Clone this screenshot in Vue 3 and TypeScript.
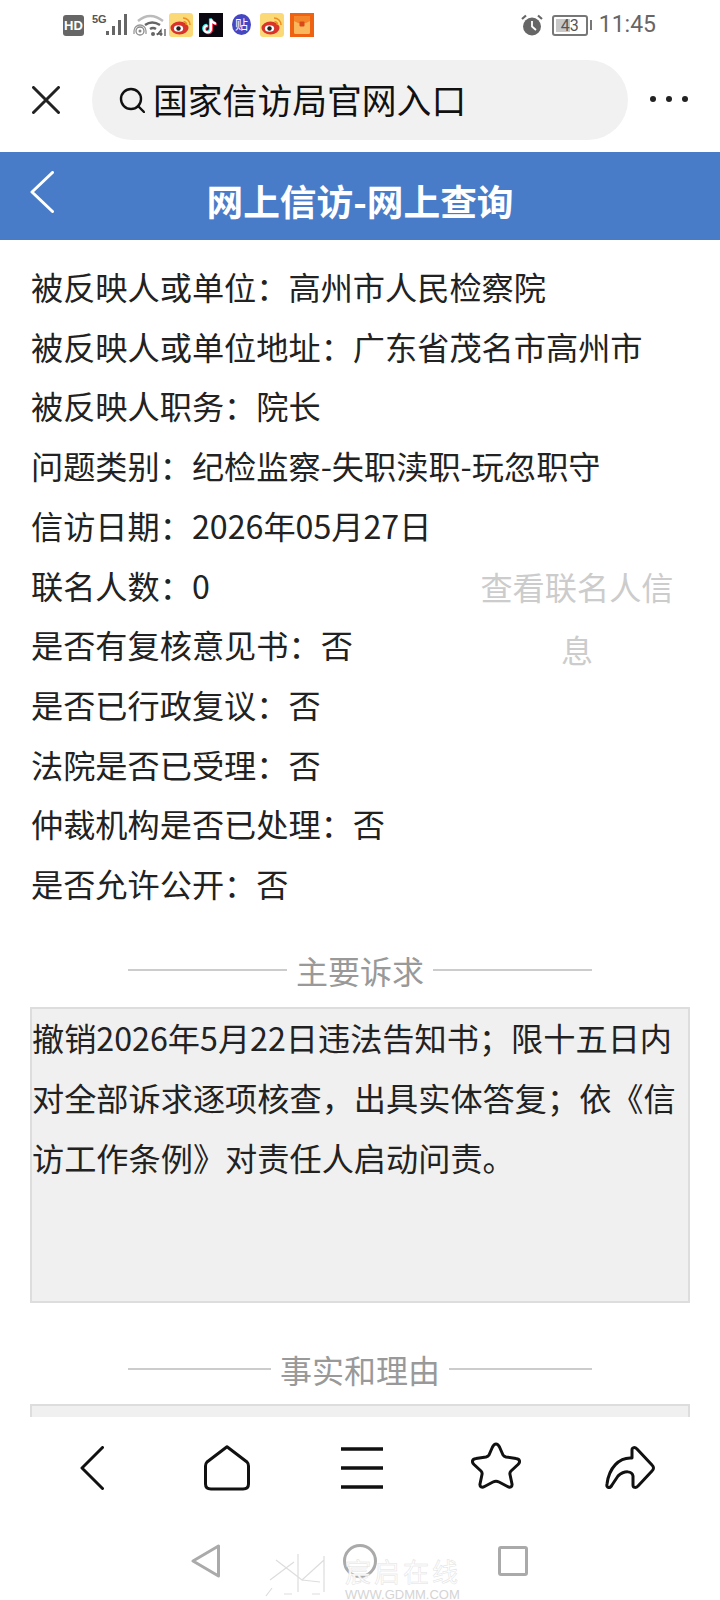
<script setup lang="ts">
const rows: { label: string; value: string }[] = [
  { label: "被反映人或单位", value: "高州市人民检察院" },
  { label: "被反映人或单位地址", value: "广东省茂名市高州市" },
  { label: "被反映人职务", value: "院长" },
  { label: "问题类别", value: "纪检监察-失职渎职-玩忽职守" },
  { label: "信访日期", value: "2026年05月27日" },
  { label: "联名人数", value: "0" },
  { label: "是否有复核意见书", value: "否" },
  { label: "是否已行政复议", value: "否" },
  { label: "法院是否已受理", value: "否" },
  { label: "仲裁机构是否已处理", value: "否" },
  { label: "是否允许公开", value: "否" },
];
</script>

<template>
  <div class="page">
    <div class="status">
      <div class="status-left">
        <span class="hd">HD</span>
        <span class="net">5G</span>
        <svg class="signal" width="24" height="24" viewBox="0 0 24 24">
          <rect x="1" y="18" width="3" height="4" fill="#666" />
          <rect x="7" y="13" width="3" height="9" fill="#666" />
          <rect x="13" y="7" width="3" height="15" fill="#666" />
          <rect x="19" y="1" width="3" height="21" fill="#666" />
        </svg>
        <svg class="wifi" width="33" height="24" viewBox="0 0 33 24" fill="none">
          <path d="M5 8 Q17 -2 30 8" stroke="#bbb" stroke-width="2.4" />
          <path d="M12 12 Q19 7 27 12" stroke="#666" stroke-width="2.4" />
          <path d="M17 16 Q20 14 23 16" stroke="#666" stroke-width="2.4" />
          <circle cx="20" cy="21" r="2" fill="#666" />
          <circle cx="7" cy="18" r="1.5" fill="#888" />
          <circle cx="7" cy="18" r="4" stroke="#888" stroke-width="1.3" />
          <path d="M1 21 V18 A6 6 0 0 1 13 18 V21" stroke="#999" stroke-width="1.3" />
          <path d="M24 22 L28 17 V23 M23.5 21 H29.5" stroke="#555" stroke-width="1.3" />
          <path d="M32 16 V23" stroke="#555" stroke-width="1.3" />
        </svg>
        <svg class="app first-app" width="24" height="24" viewBox="0 0 24 24">
          <rect width="24" height="24" rx="3" fill="#fcd977" />
          <ellipse cx="10.5" cy="15" rx="9" ry="6.5" fill="#d9342b" />
          <ellipse cx="9.5" cy="15.5" rx="4.6" ry="3.2" fill="#fff" />
          <circle cx="9.5" cy="15.5" r="2.2" fill="#222" />
          <path d="M14 5 A7 7 0 0 1 21 12 M14.5 8.5 A3.5 3.5 0 0 1 17.5 12" fill="none" stroke="#ef8d1e" stroke-width="1.6" />
        </svg>
        <svg class="app tiktok" width="24" height="24" viewBox="0 0 24 24" fill="none">
          <rect width="24" height="24" fill="#0b0710" />
          <path d="M12 6 V16 A3.4 3.4 0 1 1 8.6 12.6 M12 6 Q13 10 17 10.6" stroke="#25f4ee" stroke-width="2.6" transform="translate(-0.8 -0.6)" />
          <path d="M12 6 V16 A3.4 3.4 0 1 1 8.6 12.6 M12 6 Q13 10 17 10.6" stroke="#fe2c55" stroke-width="2.6" transform="translate(0.8 0.6)" />
          <path d="M12 6 V16 A3.4 3.4 0 1 1 8.6 12.6 M12 6 Q13 10 17 10.6" stroke="#fff" stroke-width="2.2" />
        </svg>
        <span class="tie">贴</span>
        <svg class="app weibo-2" width="24" height="24" viewBox="0 0 24 24">
          <rect width="24" height="24" rx="3" fill="#fcd977" />
          <ellipse cx="10.5" cy="15" rx="9" ry="6.5" fill="#d9342b" />
          <ellipse cx="9.5" cy="15.5" rx="4.6" ry="3.2" fill="#fff" />
          <circle cx="9.5" cy="15.5" r="2.2" fill="#222" />
          <path d="M14 5 A7 7 0 0 1 21 12 M14.5 8.5 A3.5 3.5 0 0 1 17.5 12" fill="none" stroke="#ef8d1e" stroke-width="1.6" />
        </svg>
        <svg class="app packet" width="24" height="24" viewBox="0 0 24 24">
          <rect width="24" height="24" fill="#ee6212" />
          <rect x="4" y="3" width="16" height="18" rx="1.5" fill="#fbb75c" />
          <path d="M4 3 H20 V8 Q12 13 4 8 Z" fill="#f5852a" />
          <rect x="9.5" y="8.5" width="5" height="5" rx="1" fill="#d9481a" />
        </svg>
      </div>
      <div class="status-right">
        <svg width="24" height="24" viewBox="0 0 24 24" fill="none">
          <circle cx="12" cy="13.5" r="9" fill="#666" />
          <path d="M12 8 V13.5 L16 17" stroke="#fff" stroke-width="1.8" />
          <path d="M2 6 L6 2.5 M22 6 L18 2.5" stroke="#666" stroke-width="2.2" />
        </svg>
        <span class="battery"><i class="battery-fill"></i><b>43</b></span>
        <span class="battery-tip"></span>
        <span class="time">11:45</span>
      </div>
    </div>

    <div class="searchbar">
      <svg class="close" width="28" height="28" viewBox="0 0 28 28">
        <path d="M1.5 1.5 L26.5 26.5 M26.5 1.5 L1.5 26.5" stroke="#222" stroke-width="3" stroke-linecap="round" />
      </svg>
      <div class="search-pill">
        <svg width="26" height="26" viewBox="0 0 26 26" fill="none">
          <circle cx="12" cy="12" r="10" stroke="#111" stroke-width="2.4" />
          <path d="M19 19 L25 25" stroke="#111" stroke-width="2.4" stroke-linecap="round" />
        </svg>
        <span>国家信访局官网入口</span>
      </div>
      <svg class="more" width="38" height="6" viewBox="0 0 38 6">
        <circle cx="3" cy="3" r="3" fill="#222" />
        <circle cx="19" cy="3" r="3" fill="#222" />
        <circle cx="35" cy="3" r="3" fill="#222" />
      </svg>
    </div>

    <div class="titlebar">
      <svg class="title-back" width="24" height="42" viewBox="0 0 24 42" fill="none">
        <path d="M22.5 1.5 L2 21 L22.5 40.5" stroke="#fff" stroke-width="3" stroke-linecap="round" stroke-linejoin="round" />
      </svg>
      <h1>网上信访-网上查询</h1>
    </div>

    <div class="content">
      <div v-for="(row, i) in rows" :key="row.label" class="row">
        <a v-if="i === 5" class="link">查看联名人信息</a>
        {{ row.label }}：{{ row.value }}
      </div>

      <div class="divider first"><span>主要诉求</span></div>
      <div class="box">
        <p>撤销2026年5月22日违法告知书；限十五日内对全部诉求逐项核查，出具实体答复；依《信访工作条例》对责任人启动问责。</p>
      </div>

      <div class="divider second"><span>事实和理由</span></div>
      <div class="box"></div>
    </div>

    <div class="toolbar">
      <svg width="24" height="44" viewBox="0 0 24 44" fill="none">
        <path d="M22.5 1.5 L2 22 L22.5 42.5" stroke="#111" stroke-width="3" stroke-linecap="round" stroke-linejoin="round" />
      </svg>
      <svg width="46" height="46" viewBox="0 0 46 46" fill="none">
        <path d="M23 1.8 L43 17 Q44.5 18.5 44.5 21 V39 Q44.5 44 39 44 H7 Q1.5 44 1.5 39 V21 Q1.5 18.5 3 17 Z" stroke="#111" stroke-width="3" stroke-linejoin="round" />
      </svg>
      <svg width="42" height="44" viewBox="0 0 42 44" fill="none">
        <path d="M0 3 H42 M0 22 H42 M0 41 H42" stroke="#111" stroke-width="3.4" />
      </svg>
      <svg class="star" width="50" height="48" viewBox="0 0 50 48" fill="none">
        <path d="M25 2 C26.5 2 27.5 3 28.5 5 L32 13 Q33 14.5 35 15 L45 16.5 C49 17 49.5 20 47 22.5 L40 29 Q38.5 30.5 39 32.5 L41 42 C41.5 45 39 46 36.5 44.5 L28 40 Q25 38.5 22 40 L13.5 44.5 C11 46 8.5 45 9 42 L11 32.5 Q11.5 30.5 10 29 L3 22.5 C0.5 20 1 17 5 16.5 L15 15 Q17 14.5 18 13 L21.5 5 C22.5 3 23.5 2 25 2 Z" stroke="#111" stroke-width="3" stroke-linejoin="round" />
      </svg>
      <svg class="share" width="50" height="44" viewBox="0 0 50 44" fill="none">
        <path d="M27 4 C27 1 30 1 32 3 L47 19 C49 21 49 23 47 25 L33 40 C31 42 28 42 28 39 V30 C27 25 20 24 13 30 L7 39 C5 43 1 42 2 38 C4 22 14 11 27 12 Z" stroke="#111" stroke-width="3" stroke-linejoin="round" />
      </svg>
    </div>

    <div class="sysnav">
      <svg width="30" height="34" viewBox="0 0 30 34" fill="none">
        <path d="M27.5 2 V32 L2 17 Z" stroke="#aaa" stroke-width="3" stroke-linejoin="round" />
      </svg>
      <svg width="34" height="34" viewBox="0 0 34 34" fill="none">
        <circle cx="17" cy="17" r="15.5" stroke="#aaa" stroke-width="3" />
      </svg>
      <svg width="30" height="30" viewBox="0 0 30 30" fill="none">
        <rect x="1.5" y="1.5" width="27" height="27" rx="1.5" stroke="#aaa" stroke-width="3" />
      </svg>
    </div>

    <div class="watermark">
      <svg width="80" height="46" viewBox="0 0 80 46" fill="none">
        <path d="M8 28 L32 10 M36 2 V40 M14 8 L40 28 L62 8 M40 28 L58 30 M62 4 V40 M4 44 L10 36 M50 42 H58 M22 42 H30" stroke="#ddd" stroke-width="1.2" />
      </svg>
      <div class="wm-text">
        <div class="wm-cn">宸启在线</div>
        <div class="wm-en">WWW.GDMM.COM</div>
      </div>
    </div>
  </div>
</template>

<style>
html,
body {
  margin: 0;
  background: #fff;
}
</style>

<style scoped>
.page {
  position: relative;
  width: 720px;
  height: 1600px;
  overflow: hidden;
  display: flex;
  flex-direction: column;
  background: #fff;
  font-family: "Noto Sans CJK SC", "Liberation Sans", sans-serif;
  color: #222;
}

.status {
  height: 50px;
  flex: none;
  display: flex;
  justify-content: space-between;
  align-items: center;
  padding: 0 64px 0 63px;
}

.status-left,
.status-right {
  display: flex;
  align-items: center;
}

.hd {
  width: 21px;
  height: 21px;
  line-height: 21px;
  border-radius: 3px;
  background: #666;
  color: #fff;
  font: 700 13px/21px "Liberation Sans", sans-serif;
  text-align: center;
}

.net {
  width: 14px;
  margin: -12px 0 0 8px;
  color: #555;
  font: 700 11px/12px "Liberation Sans", sans-serif;
}

.signal {
  margin-left: -1px;
}

.wifi {
  margin-left: 4px;
}

.first-app {
  margin-left: 3px;
}

.tiktok {
  margin-left: 6px;
}

.tie {
  position: relative;
  width: 19px;
  height: 21px;
  margin: -1px 0 0 9px;
  border-radius: 50%;
  background: #4546c2;
  color: #fff;
  font-size: 13px;
  line-height: 20px;
  text-align: center;
}

.tie::after {
  content: "";
  position: absolute;
  left: 7px;
  bottom: -3px;
  width: 5px;
  height: 5px;
  background: #4546c2;
  transform: rotate(45deg);
  z-index: -1;
}

.weibo-2 {
  margin-left: 9px;
}

.packet {
  margin-left: 6px;
}

.battery {
  position: relative;
  width: 32px;
  height: 17px;
  margin-left: 8px;
  border: 2px solid #777;
  border-radius: 3px;
  overflow: hidden;
}

.battery-fill {
  position: absolute;
  left: 2px;
  top: 2px;
  bottom: 2px;
  width: 14px;
  background: #c8c8c8;
}

.battery b {
  position: relative;
  display: block;
  font: 400 16px/17px Roboto, sans-serif;
  color: #555;
  text-align: center;
}

.battery-tip {
  width: 2px;
  height: 10px;
  margin-left: 2px;
  background: #777;
}

.time {
  margin-left: 7px;
  font: 400 23px/28px Roboto, sans-serif;
  color: #666;
}

.searchbar {
  height: 102px;
  flex: none;
  display: flex;
  align-items: flex-start;
  padding-left: 32px;
}

.close {
  margin-top: 36px;
}

.search-pill {
  width: 536px;
  height: 80px;
  margin: 10px 0 0 32px;
  padding-left: 27px;
  box-sizing: border-box;
  display: flex;
  align-items: center;
  gap: 8px;
  border-radius: 40px;
  background: #f1f1f1;
  color: #111;
  font-size: 34.8px;
}

.search-pill span {
  margin-top: -3px;
}

.more {
  margin: 46px 0 0 22px;
}

.titlebar {
  position: relative;
  height: 88px;
  flex: none;
  background: #487cc8;
}

.title-back {
  position: absolute;
  left: 30px;
  top: 19px;
}

.titlebar h1 {
  margin: 0;
  padding-top: 4px;
  color: #fff;
  font-size: 36.7px;
  font-weight: 700;
  line-height: 88px;
  height: 84px;
  text-align: center;
}

.content {
  flex: 1;
  min-height: 0;
  overflow: hidden;
  padding: 17px 30px 0;
}

.row {
  padding-left: 1px;
  font-size: 32.2px;
  line-height: 59.7px;
}

.link {
  float: right;
  width: 194px;
  margin: -1px 16px 0 0;
  color: #ccc;
  line-height: 63px;
  text-align: center;
}

.divider {
  display: flex;
  align-items: center;
  justify-content: center;
  gap: 9px;
  width: 464px;
  margin: 0 auto;
  color: #999;
  font-size: 32px;
  line-height: 46px;
}

.divider::before,
.divider::after {
  content: "";
  flex: 1;
  height: 2px;
  background: #ccc;
}

.divider.first {
  margin-top: 33px;
  margin-bottom: 14px;
}

.divider.second {
  margin-top: 43px;
  margin-bottom: 12px;
}

.box {
  height: 296px;
  box-sizing: border-box;
  border: 2px solid #ddd;
  background: #f0f0f0;
  font-size: 32.2px;
  line-height: 60px;
}

.box p {
  margin: -2px 0 0;
}

.toolbar {
  height: 109px;
  flex: none;
  box-sizing: border-box;
  padding: 29px 0 0 24px;
  display: grid;
  grid-template-columns: repeat(5, 135px);
  grid-template-rows: 44px;
  justify-items: center;
  align-items: center;
  background: #fff;
}

.star {
  margin: -4px 2px 0 0;
}

.share {
  margin-right: 4px;
}

.sysnav {
  height: 74px;
  flex: none;
  display: flex;
  align-items: center;
  justify-content: space-between;
  padding: 0 192px 4px 191px;
  box-sizing: border-box;
  background: #fff;
}

.watermark {
  position: absolute;
  left: 262px;
  top: 1552px;
  display: flex;
  gap: 3px;
}

.wm-text {
  width: 118px;
}

.wm-cn {
  color: #fff;
  -webkit-text-stroke: 0.5px #e2e2e2;
  font-size: 26px;
  letter-spacing: 3px;
  line-height: 37px;
  white-space: nowrap;
}

.wm-en {
  color: #d4d4d4;
  font: 400 13px/11px "Liberation Sans", sans-serif;
  white-space: nowrap;
}
</style>
